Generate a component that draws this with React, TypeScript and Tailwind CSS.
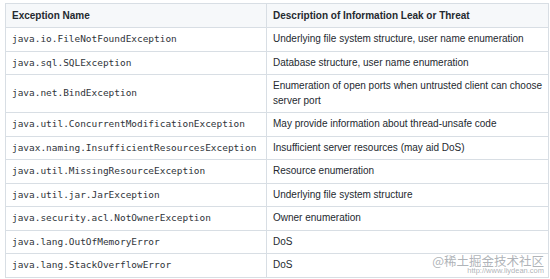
import React from "react";

interface Row {
  name: string;
  desc: string;
}

const rows: Row[] = [
  { name: "java.io.FileNotFoundException", desc: "Underlying file system structure, user name enumeration" },
  { name: "java.sql.SQLException", desc: "Database structure, user name enumeration" },
  { name: "java.net.BindException", desc: "Enumeration of open ports when untrusted client can choose server port" },
  { name: "java.util.ConcurrentModificationException", desc: "May provide information about thread-unsafe code" },
  { name: "javax.naming.InsufficientResourcesException", desc: "Insufficient server resources (may aid DoS)" },
  { name: "java.util.MissingResourceException", desc: "Resource enumeration" },
  { name: "java.util.jar.JarException", desc: "Underlying file system structure" },
  { name: "java.security.acl.NotOwnerException", desc: "Owner enumeration" },
  { name: "java.lang.OutOfMemoryError", desc: "DoS" },
  { name: "java.lang.StackOverflowError", desc: "DoS" },
];

export default function App() {
  return (
    <div className="relative w-[550px] h-[279px] overflow-hidden bg-white pl-[5px] pt-[3px] font-['Liberation_Sans',Arial,sans-serif] text-[#24292f]">
      <table className="w-[544px] border-collapse table-fixed">
        <colgroup>
          <col className="w-[261px]" />
          <col />
        </colgroup>
        <thead>
          <tr className="bg-[#f6f8fa]">
            <th className="border border-[#d8dee4] h-[24px] px-[6px] text-left text-[10px] font-bold leading-[14px]">
              Exception Name
            </th>
            <th className="border border-[#d8dee4] h-[24px] pl-[6px] pr-[2px] text-left text-[10px] font-bold leading-[14px]">
              Description of Information Leak or Threat
            </th>
          </tr>
        </thead>
        <tbody>
          {rows.map((r) => (
            <tr key={r.name}>
              <td className="border border-[#d8dee4] px-[6px] py-[4px] align-middle font-['DejaVu_Sans_Mono',monospace] text-[9.45px] leading-[14.5px] whitespace-nowrap text-[#2f343a]">
                {r.name}
              </td>
              <td className="border border-[#d8dee4] pl-[6px] pr-[1px] py-[4px] align-middle text-[10px] leading-[14.5px]">
                {r.desc}
              </td>
            </tr>
          ))}
        </tbody>
      </table>

      {/* watermark */}
      <div className="absolute left-[434px] top-[255px] w-[110px] flex flex-col items-end leading-none whitespace-nowrap text-[#9aa0a6]/80">
        <span className="text-[12.5px] font-['Noto_Sans_CJK_SC',sans-serif]">@稀土掘金技术社区</span>
        <span className="text-[7.5px] font-['Liberation_Sans',sans-serif] -mt-[1px]">http://www.liydean.com</span>
      </div>
    </div>
  );
}
